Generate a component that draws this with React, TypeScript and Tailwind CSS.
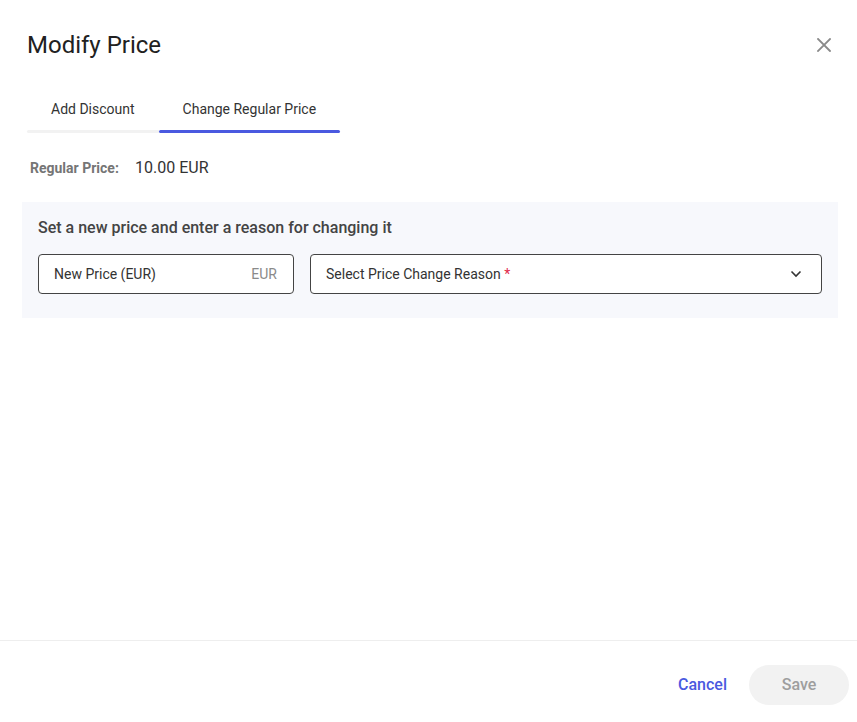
import React from "react";

export default function App() {
  return (
    <div className="w-[857px] h-[722px] bg-white flex flex-col font-['Roboto','Liberation_Sans',sans-serif]">
      <div className="flex-1 pl-[22px] pr-[19px]">
        <div className="flex items-center justify-between pt-[29px]">
          <h1 className="ml-[5px] text-[24px] leading-[32px] text-[#212121] font-normal">Modify Price</h1>
          <button className="w-6 h-6 flex items-center justify-center mr-[2px] text-[#8a8a8a]">
            <svg width="14" height="14" viewBox="0 0 14 14" fill="none" stroke="currentColor" strokeWidth="1.8" strokeLinecap="square">
              <path d="M1 1 L13 13 M13 1 L1 13" />
            </svg>
          </button>
        </div>

        <div className="ml-[5px] mt-[38px] flex">
          <div className="flex flex-col">
            <div className="px-6 text-[14px] leading-5 text-[#333333]">Add Discount</div>
            <div className="mt-[11px] h-[3px] bg-[#f2f2f2] rounded-l-full" />
          </div>
          <div className="flex flex-col">
            <div className="px-6 text-[14px] leading-5 text-[#333333]">Change Regular Price</div>
            <div className="mt-[11px] h-[3px] bg-[#4a59e0] rounded-full" />
          </div>
        </div>

        <div className="ml-[8px] mt-[23px] flex items-baseline">
          <span className="w-[105px] text-[14px] leading-5 font-bold text-[#757575]">Regular Price:</span>
          <span className="text-[16px] leading-6 text-[#333333]">10.00 EUR</span>
        </div>

        <div className="mt-[22px] bg-[#f7f8fc] pt-[14px] px-4 pb-6">
          <div className="text-[16px] leading-6 font-medium text-[#444444]">Set a new price and enter a reason for changing it</div>
          <div className="mt-[14px] flex gap-4">
            <div className="w-[256px] h-10 rounded border border-[#444444] bg-white flex items-center justify-between pl-[15px] pr-4 text-[14px]">
              <span className="text-[#333333]">New Price (EUR)</span>
              <span className="text-[#8a8a8a]">EUR</span>
            </div>
            <div className="flex-1 h-10 rounded border border-[#444444] bg-white flex items-center justify-between pl-[15px] pr-[19px] text-[14px]">
              <span className="text-[#333333]">
                Select Price Change Reason <span className="text-[#e0294a]">*</span>
              </span>
              <svg width="12" height="8" viewBox="0 0 12 8" fill="none" stroke="#333333" strokeWidth="1.6">
                <path d="M1.5 1.5 L6 6 L10.5 1.5" />
              </svg>
            </div>
          </div>
        </div>
      </div>

      <div className="h-[82px] border-t border-[#eeeeee] flex items-start justify-end pt-6 pr-[8px]">
        <button className="mt-[8px] mr-[22px] text-[16px] leading-6 font-medium text-[#4a59e0]">Cancel</button>
        <button className="w-[100px] h-10 rounded-full bg-[#f2f2f2] text-[16px] font-medium text-[#9e9e9e]">Save</button>
      </div>
    </div>
  );
}
